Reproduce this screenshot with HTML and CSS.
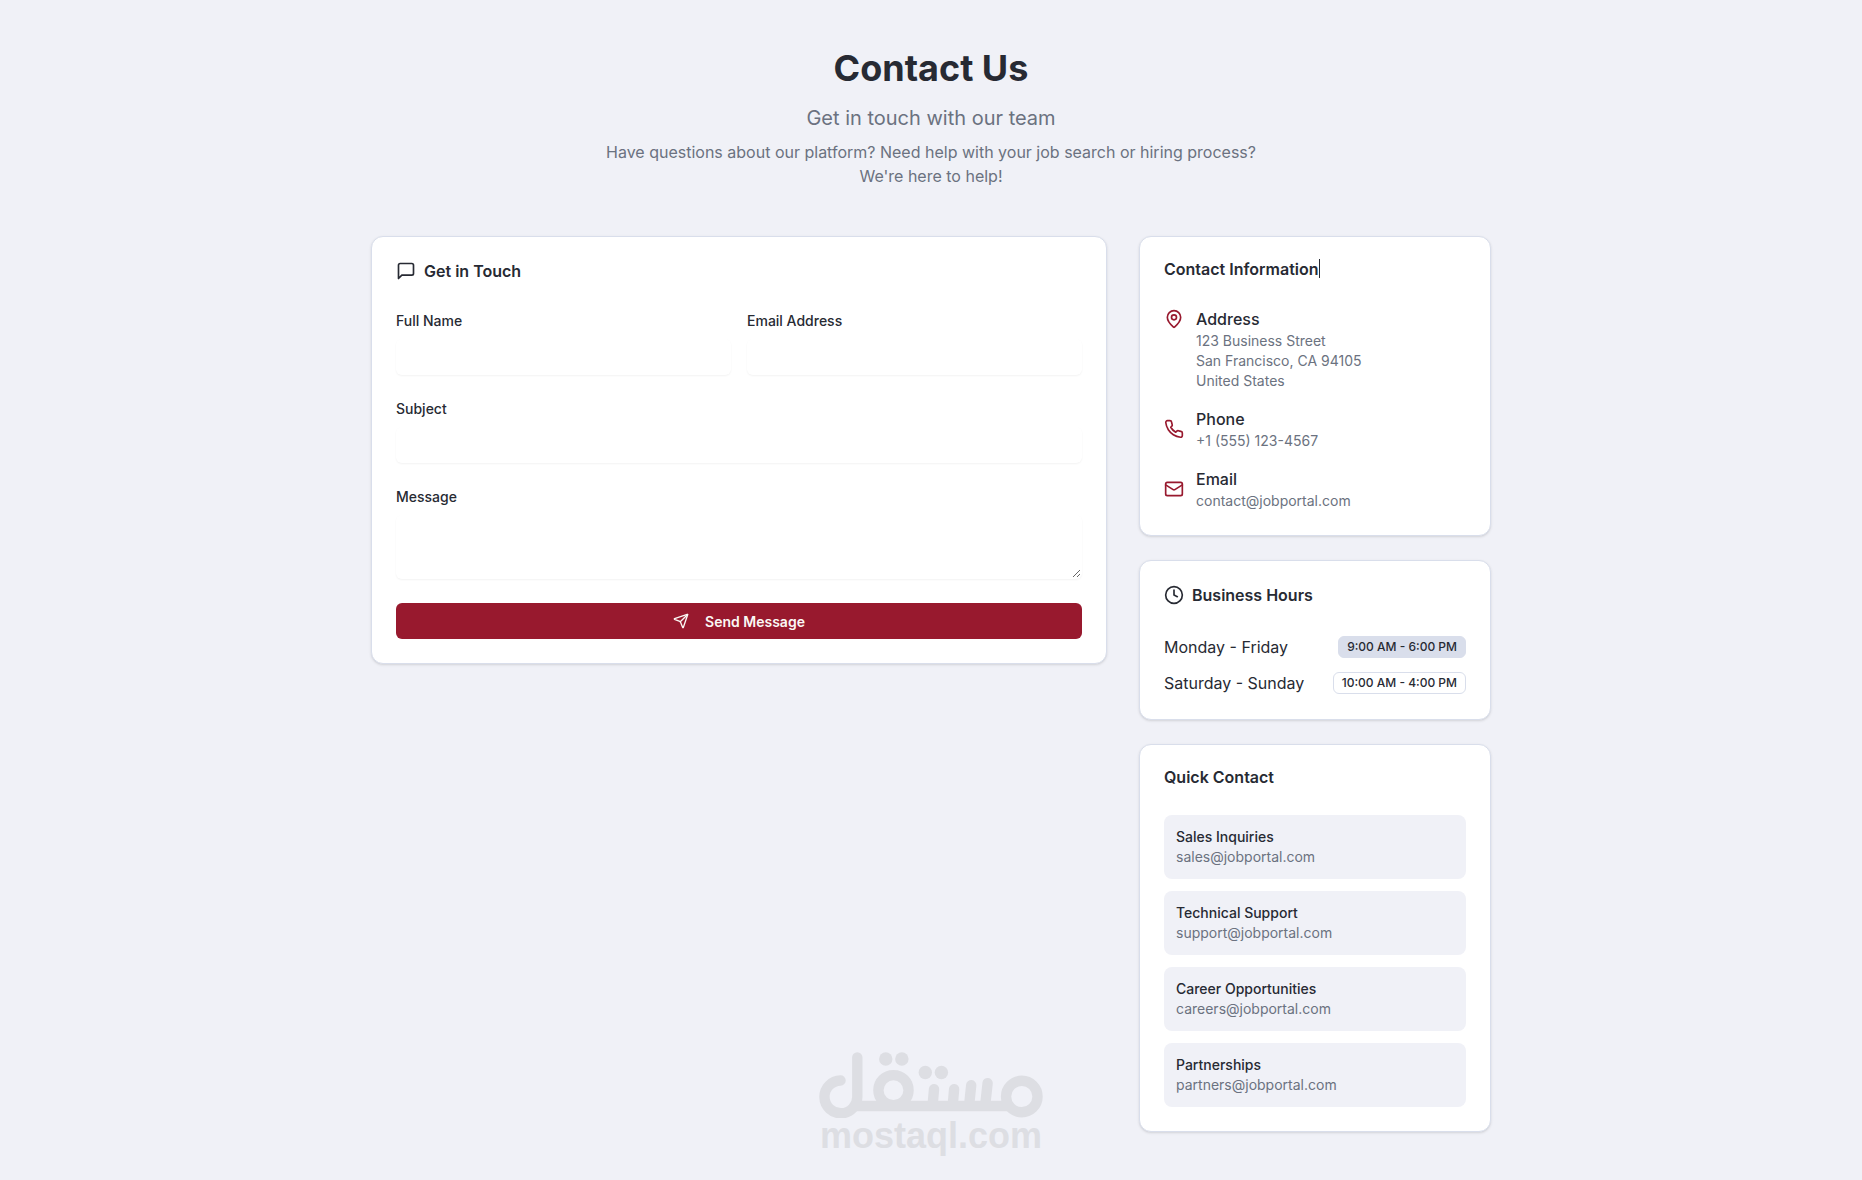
FILE: index.html
```html
<!DOCTYPE html>
<html lang="en">
<head>
    <meta charset="UTF-8">
    <meta name="viewport" content="width=device-width, initial-scale=1.0">
    <title>Contact Us</title>
    <link rel="stylesheet" href="styles.css">
</head>
<body>
    <main class="container">
        <header class="page-header">
            <h1>Contact Us</h1>
            <p class="subtitle">Get in touch with our team</p>
            <p class="description">Have questions about our platform? Need help with your job search or hiring process? We're here to help!</p>
        </header>

        <div class="layout">
            <!-- Contact form -->
            <section class="card form-card">
                <h2 class="card-title">
                    <svg class="icon" viewBox="0 0 24 24"><path d="M21 15a2 2 0 0 1-2 2H7l-4 4V5a2 2 0 0 1 2-2h14a2 2 0 0 1 2 2z"/></svg>
                    Get in Touch
                </h2>
                <form class="contact-form">
                    <div class="form-row">
                        <div class="field">
                            <label for="name">Full Name</label>
                            <input type="text" id="name" name="name">
                        </div>
                        <div class="field">
                            <label for="email">Email Address</label>
                            <input type="email" id="email" name="email">
                        </div>
                    </div>
                    <div class="field">
                        <label for="subject">Subject</label>
                        <input type="text" id="subject" name="subject">
                    </div>
                    <div class="field">
                        <label for="message">Message</label>
                        <textarea id="message" name="message"></textarea>
                    </div>
                    <button type="submit" class="btn">
                        <svg class="icon-sm" viewBox="0 0 24 24"><path d="M14.536 21.686a.5.5 0 0 0 .937-.024l6.5-19a.496.496 0 0 0-.635-.635l-19 6.5a.5.5 0 0 0-.024.937l7.93 3.18a2 2 0 0 1 1.112 1.11z"/><path d="m21.854 2.147-10.94 10.939"/></svg>
                        Send Message
                    </button>
                </form>
            </section>

            <aside class="sidebar">
                <section class="card">
                    <h2 class="card-title"><span class="caret">Contact Information</span></h2>
                    <div class="info-list">
                        <div class="info-item info-top">
                            <svg class="icon" viewBox="0 0 24 24"><path d="M20 10c0 4.993-5.539 10.193-7.399 11.799a1 1 0 0 1-1.202 0C9.539 20.193 4 14.993 4 10a8 8 0 0 1 16 0"/><circle cx="12" cy="10" r="3"/></svg>
                            <div>
                                <h3>Address</h3>
                                <p class="muted">123 Business Street<br>San Francisco, CA 94105<br>United States</p>
                            </div>
                        </div>
                        <div class="info-item">
                            <svg class="icon" viewBox="0 0 24 24"><path d="M22 16.92v3a2 2 0 0 1-2.18 2 19.79 19.79 0 0 1-8.63-3.07 19.5 19.5 0 0 1-6-6 19.79 19.79 0 0 1-3.07-8.67A2 2 0 0 1 4.11 2h3a2 2 0 0 1 2 1.72 12.84 12.84 0 0 0 .7 2.81 2 2 0 0 1-.45 2.11L8.09 9.91a16 16 0 0 0 6 6l1.27-1.27a2 2 0 0 1 2.11-.45 12.84 12.84 0 0 0 2.81.7A2 2 0 0 1 22 16.92z"/></svg>
                            <div>
                                <h3>Phone</h3>
                                <a class="muted" href="tel:+15551234567">+1 (555) 123-4567</a>
                            </div>
                        </div>
                        <div class="info-item">
                            <svg class="icon" viewBox="0 0 24 24"><rect x="2" y="4" width="20" height="16" rx="2"/><path d="m22 7-8.97 5.7a1.94 1.94 0 0 1-2.06 0L2 7"/></svg>
                            <div>
                                <h3>Email</h3>
                                <a class="muted" href="mailto:contact@jobportal.com">contact@jobportal.com</a>
                            </div>
                        </div>
                    </div>
                </section>

                <section class="card">
                    <h2 class="card-title">
                        <svg class="icon" viewBox="0 0 24 24"><circle cx="12" cy="12" r="10"/><path d="M12 6v6l4 2"/></svg>
                        Business Hours
                    </h2>
                    <div class="hours">
                        <div class="hours-row">
                            <span>Monday - Friday</span>
                            <span class="badge badge-filled">9:00 AM - 6:00 PM</span>
                        </div>
                        <div class="hours-row">
                            <span>Saturday - Sunday</span>
                            <span class="badge">10:00 AM - 4:00 PM</span>
                        </div>
                    </div>
                </section>

                <section class="card">
                    <h2 class="card-title">Quick Contact</h2>
                    <div class="quick-list">
                        <div class="quick-item">
                            <h4>Sales Inquiries</h4>
                            <a class="muted" href="mailto:sales@jobportal.com">sales@jobportal.com</a>
                        </div>
                        <div class="quick-item">
                            <h4>Technical Support</h4>
                            <a class="muted" href="mailto:support@jobportal.com">support@jobportal.com</a>
                        </div>
                        <div class="quick-item">
                            <h4>Career Opportunities</h4>
                            <a class="muted" href="mailto:careers@jobportal.com">careers@jobportal.com</a>
                        </div>
                        <div class="quick-item">
                            <h4>Partnerships</h4>
                            <a class="muted" href="mailto:partners@jobportal.com">partners@jobportal.com</a>
                        </div>
                    </div>
                </section>
            </aside>
        </div>
    </main>

    <!-- Watermark -->
    <div class="watermark">
        <svg viewBox="57 69 668 197">
            <g class="mark-lines">
                <path d="M121 154A49 49 0 1 0 171 202V85"/>
                <path d="M400 180 396 226M460 180 456 226M511 168 505 226M560 162 553 226"/>
                <circle cx="279" cy="183" r="45"/>
                <circle cx="662" cy="202" r="47"/>
                <path class="mark-base" d="M160 230H630"/>
            </g>
            <circle cx="256" cy="90" r="20"/>
            <circle cx="304" cy="90" r="20"/>
            <circle cx="374" cy="130" r="20"/>
            <circle cx="422" cy="130" r="20"/>
        </svg>
        <span>mostaql.com</span>
    </div>
</body>
</html>
```
FILE: styles.css
```css
* {
    box-sizing: border-box;
}
body {
    margin: 0;
    min-height: 100vh;
    position: relative;
    font-family: Inter, "Liberation Sans", sans-serif;
    font-size: 16px;
    line-height: 24px;
    color: #272a33;
    background-color: #f0f1f7;
}
h1, h2, h3, h4, p {
    margin: 0;
}
a {
    text-decoration: none;
}
.container {
    max-width: 1152px;
    margin: auto;
    padding: 48px 16px;
}

/* Header */
.page-header {
    text-align: center;
    margin-bottom: 48px;
}
.page-header h1 {
    font-size: 36px;
    line-height: 40px;
    font-weight: 700;
    margin-bottom: 16px;
}
.subtitle {
    font-size: 20px;
    line-height: 28px;
    color: #6b7280;
    margin-bottom: 8px;
}
.description {
    max-width: 672px;
    margin: auto;
    color: #6b7280;
}

/* Cards */
.layout {
    display: grid;
    grid-template-columns: repeat(3, 1fr);
    gap: 32px;
    align-items: start;
}
.form-card {
    grid-column: span 2;
}
.sidebar {
    display: flex;
    flex-direction: column;
    gap: 24px;
}
.card {
    background: white;
    border: 1px solid #d9deeb;
    border-radius: 12px;
    padding: 24px;
    box-shadow: 0 1px 3px rgba(0,0,0,0.1), 0 1px 2px -1px rgba(0,0,0,0.1);
}
.card-title {
    display: flex;
    align-items: center;
    gap: 8px;
    font-size: 16px;
    line-height: 16px;
    font-weight: 600;
    margin-bottom: 30px;
}
.icon, .icon-sm {
    width: 20px;
    height: 20px;
    flex-shrink: 0;
    fill: none;
    stroke: currentColor;
    stroke-width: 2;
    stroke-linecap: round;
    stroke-linejoin: round;
}
.icon-sm {
    width: 16px;
    height: 16px;
}
.muted {
    display: block;
    font-size: 14px;
    line-height: 20px;
    color: #6b7280;
}
.caret {
    position: relative;
}
.caret::after {
    content: "";
    position: absolute;
    top: -2px;
    left: 100%;
    width: 1px;
    height: 19px;
    background: #272a33;
}

/* Form */
.contact-form {
    display: flex;
    flex-direction: column;
    gap: 24px;
}
.form-row {
    display: grid;
    grid-template-columns: 1fr 1fr;
    gap: 16px;
}
.field {
    display: flex;
    flex-direction: column;
    gap: 8px;
}
label {
    font-size: 14px;
    line-height: 20px;
    font-weight: 500;
}
input, textarea {
    width: 100%;
    height: 36px;
    padding: 8px 12px;
    font-family: inherit;
    font-size: 14px;
    color: inherit;
    background: white;
    border: 1px solid transparent;
    border-radius: 6px;
    box-shadow: 0 1px 2px rgba(0,0,0,0.05);
}
textarea {
    display: block;
    height: 64px;
    resize: vertical;
}
.btn {
    display: flex;
    align-items: center;
    justify-content: center;
    gap: 16px;
    height: 36px;
    border: none;
    border-radius: 6px;
    background-color: #98192e;
    color: #fbf8f5;
    font-family: inherit;
    font-size: 14px;
    font-weight: 600;
    cursor: pointer;
}
.btn:hover {
    background-color: #a7304a;
}

/* Contact information */
.info-list {
    display: flex;
    flex-direction: column;
    gap: 16px;
}
.info-item {
    display: flex;
    align-items: center;
    gap: 12px;
}
.info-item .icon {
    color: #98192e;
}
.info-top {
    align-items: flex-start;
}
.info-top .icon {
    margin-top: 2px;
}
.info-item h3 {
    font-size: 16px;
    font-weight: 500;
}

/* Business hours */
.hours, .quick-list {
    display: flex;
    flex-direction: column;
    gap: 12px;
}
.hours-row {
    display: flex;
    align-items: center;
    justify-content: space-between;
}
.badge {
    padding: 2px 8px;
    border: 1px solid #d9deeb;
    border-radius: 6px;
    font-size: 12px;
    line-height: 16px;
    font-weight: 500;
    white-space: nowrap;
}
.badge-filled {
    background: #d9deeb;
}

/* Quick contact */
.quick-item {
    padding: 12px;
    border-radius: 8px;
    background: #f0f1f7;
}
.quick-item h4 {
    font-size: 14px;
    line-height: 20px;
    font-weight: 500;
}

/* Watermark */
.watermark {
    position: absolute;
    left: 0;
    right: 0;
    bottom: 26px;
    display: flex;
    flex-direction: column;
    align-items: center;
    pointer-events: none;
    font-family: "Liberation Sans", Arial, sans-serif;
    font-size: 36px;
    line-height: 36px;
    font-weight: 700;
    color: #dddee3;
}
.watermark svg {
    width: 224px;
    height: 66px;
    fill: currentColor;
}
.mark-lines {
    fill: none;
    stroke: currentColor;
    stroke-width: 31;
    stroke-linecap: round;
}
.mark-base {
    stroke-linecap: butt;
}
```
